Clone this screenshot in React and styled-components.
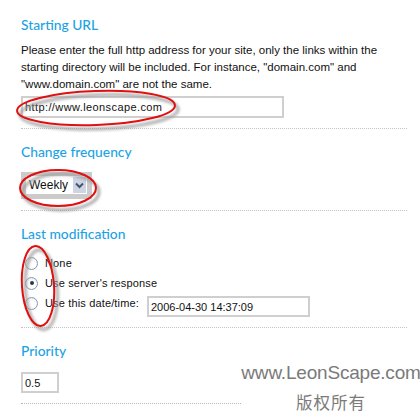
import React from "react"
import styled, { createGlobalStyle } from "styled-components"

const GlobalStyle = createGlobalStyle`
  body {
    margin: 0;
    background: #fff;
    font-family: "Liberation Sans", Arial, sans-serif;
  }
`

const Page = styled.div`
  position: relative;
  width: 420px;
  height: 413px;
  overflow: hidden;
  background: #fff;
`

const Form = styled.div`
  padding: 16px 13px 0 21px;
`

const Section = styled.div`
  border-bottom: 1px dotted ${(p) => (p.$short ? "#b8b8b8" : "#c4c4c4")};
  width: ${(p) => (p.$short ? "220px" : "386px")};
  padding-bottom: ${(p) => p.$pad || 10}px;
  margin-bottom: 14px;
`

const Heading = styled.h2`
  margin: 0 0 ${(p) => p.$gap || 8}px;
  font-family: Lato, "Open Sans", sans-serif;
  font-weight: 500;
  font-size: 13.8px;
  line-height: 18px;
  color: #1ba3e4;
`

const Text = styled.p`
  margin: 0 0 3.5px;
  font-size: 11.5px;
  line-height: 17px;
  color: #111;
  white-space: nowrap;
`

const Input = styled.input`
  box-sizing: border-box;
  display: block;
  width: ${(p) => p.$w}px;
  height: ${(p) => p.$h || 22}px;
  border: 2px solid #cfcfcf;
  padding: 0 2px;
  font-family: "Liberation Sans", Arial, sans-serif;
  font-size: 11px;
  letter-spacing: ${(p) => p.$ls || 0}px;
  color: #111;
  outline: none;
  background: #fff;
`

const DateInput = styled(Input)`
  align-self: flex-start;
  margin-top: 3px;
  margin-left: 1px;
`

const SelectFrame = styled.div`
  display: inline-flex;
  align-items: center;
  background: #cbcbcb;
  padding: 4px 5px 5px;
`

const SelectBox = styled.div`
  display: flex;
  align-items: center;
  background: #fff;
  height: 18px;
  padding-left: 3px;
  font-size: 12px;
  color: #111;
`

const SelectArrow = styled.span`
  display: flex;
  align-items: center;
  justify-content: center;
  width: 13px;
  height: 16px;
  margin: 0 1px 0 5px;
  background: #cdd4e4;
`

const RadioList = styled.div`
  display: flex;
  flex-direction: column;
  padding-left: 4px;
`

const RadioRow = styled.label`
  display: flex;
  align-items: center;
  height: 20px;
  font-size: 11px;
  letter-spacing: 0.15px;
  color: #111;
  gap: 7px;
`

const Radio = styled.span`
  box-sizing: border-box;
  flex: none;
  width: 13px;
  height: 13px;
  border-radius: 50%;
  border: 1px solid #8a9aa8;
  background: radial-gradient(circle at 60% 60%, #fff 30%, #dfe3e8 100%);
  display: flex;
  align-items: center;
  justify-content: center;
  &::after {
    content: "";
    width: 4px;
    height: 4px;
    border-radius: 50%;
    background: ${(p) => (p.$on ? "#2b3a4a" : "transparent")};
  }
`

const Watermark = styled.div`
  position: absolute;
  left: 240px;
  top: 362px;
  width: 182px;
  text-align: center;
  color: #7a7a7a;
`

const MarkSite = styled.div`
  font-family: "Liberation Sans", Arial, sans-serif;
  font-size: 19px;
  letter-spacing: -0.2px;
  line-height: 22px;
`

const MarkCopy = styled.div`
  margin-top: 8px;
  font-family: "Noto Sans CJK SC", sans-serif;
  font-size: 16.5px;
  letter-spacing: 1px;
  line-height: 20px;
`

const Marks = styled.svg`
  position: absolute;
  left: 0;
  top: 0;
  pointer-events: none;
`

function Ellipses() {
  const rings = [
    { cx: 96, cy: 108, rx: 79, ry: 17, r: -2 },
    { cx: 58, cy: 188, rx: 38, ry: 18, r: 0 },
    { cx: 38, cy: 286, rx: 16, ry: 40, r: -4 },
  ]
  return (
    <Marks width="420" height="413">
      <defs>
        <filter id="blur">
          <feGaussianBlur stdDeviation="1.6" />
        </filter>
      </defs>
      {rings.map((e, i) => (
        <g key={i} transform={`rotate(${e.r} ${e.cx} ${e.cy})`}>
          <ellipse cx={e.cx + 3} cy={e.cy + 4} rx={e.rx} ry={e.ry} fill="none" stroke="#9a9a9a" strokeWidth="2.5" filter="url(#blur)" />
          <ellipse cx={e.cx} cy={e.cy} rx={e.rx} ry={e.ry} fill="none" stroke="#e01010" strokeWidth="2" />
        </g>
      ))}
    </Marks>
  )
}

export default function App() {
  return (
    <Page>
      <GlobalStyle />
      <Form>
        <Section $pad={10}>
          <Heading $gap={7.5}>Starting URL</Heading>
          <Text>
            Please enter the full http address for your site, only the links within the
            <br />
            starting directory will be included. For instance, "domain.com" and
            <br />
            "www.domain.com" are not the same.
          </Text>
          <Input $w={263} $ls={0.4} defaultValue="http://www.leonscape.com" />
        </Section>
        <Section $pad={11}>
          <Heading $gap={11}>Change frequency</Heading>
          <SelectFrame>
            <SelectBox>
              Weekly
              <SelectArrow>
                <svg width="9" height="7" viewBox="0 0 9 7">
                  <path d="M1 1.5 L4.5 5 L8 1.5" fill="none" stroke="#4a5468" strokeWidth="2" />
                </svg>
              </SelectArrow>
            </SelectBox>
          </SelectFrame>
        </Section>
        <Section $pad={14}>
          <Heading $gap={10}>Last modification</Heading>
          <RadioList>
            <RadioRow>
              <Radio />
              None
            </RadioRow>
            <RadioRow>
              <Radio $on />
              Use server's response
            </RadioRow>
            <RadioRow>
              <Radio />
              Use this date/time:
              <DateInput $w={163} $h={21} defaultValue="2006-04-30 14:37:09" />
            </RadioRow>
          </RadioList>
        </Section>
        <Section $short $pad={10}>
          <Heading $gap={12}>Priority</Heading>
          <Input $w={38} $h={21} defaultValue="0.5" />
        </Section>
      </Form>
      <Watermark>
        <MarkSite>www.LeonScape.com</MarkSite>
        <MarkCopy>版权所有</MarkCopy>
      </Watermark>
      <Ellipses />
    </Page>
  )
}
